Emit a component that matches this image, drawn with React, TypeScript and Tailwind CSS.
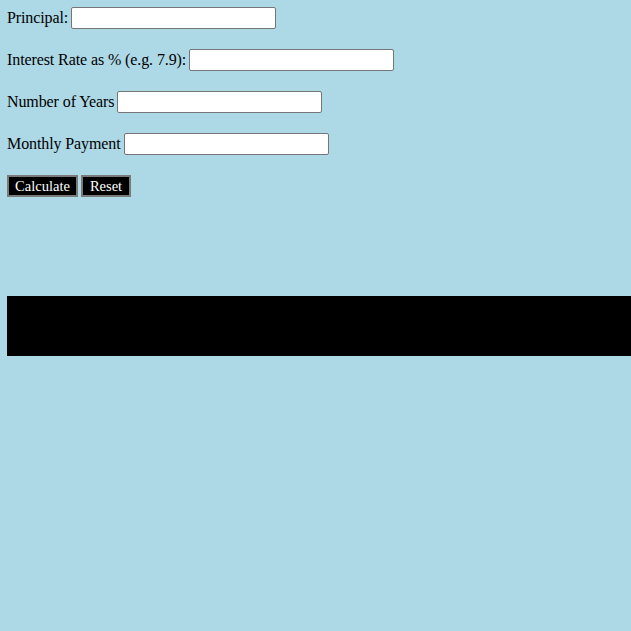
import React from "react";

function Field({ label }: { label: string }) {
  return (
    <div className="flex items-center gap-[3px] h-[22px]">
      <span className="tracking-[-0.1px]">{label}</span>
      <input
        type="text"
        className="w-[205px] h-[22px] bg-white border border-[#767676] rounded-[2px] outline-none"
      />
    </div>
  );
}

export default function App() {
  return (
    <div
      className="min-h-screen bg-[#add8e6] overflow-hidden pt-[7px] pl-[7px] text-black text-[16px]"
      style={{ fontFamily: '"Liberation Serif", "Times New Roman", serif' }}
    >
      <div className="flex flex-col gap-[20px]">
        <Field label="Principal:" />
        <Field label="Interest Rate as % (e.g. 7.9):" />
        <Field label="Number of Years" />
        <Field label="Monthly Payment" />
        <div className="flex gap-[3px] h-[22px]">
          <button className="w-[71px] h-[22px] bg-black text-white text-[14.5px] leading-none border-2 border-[#7a7a7a]">
            Calculate
          </button>
          <button className="w-[50px] h-[22px] bg-black text-white text-[14.5px] leading-none border-2 border-[#7a7a7a]">
            Reset
          </button>
        </div>
      </div>
      <div className="mt-[99px] w-[660px] h-[60px] bg-black" />
    </div>
  );
}
